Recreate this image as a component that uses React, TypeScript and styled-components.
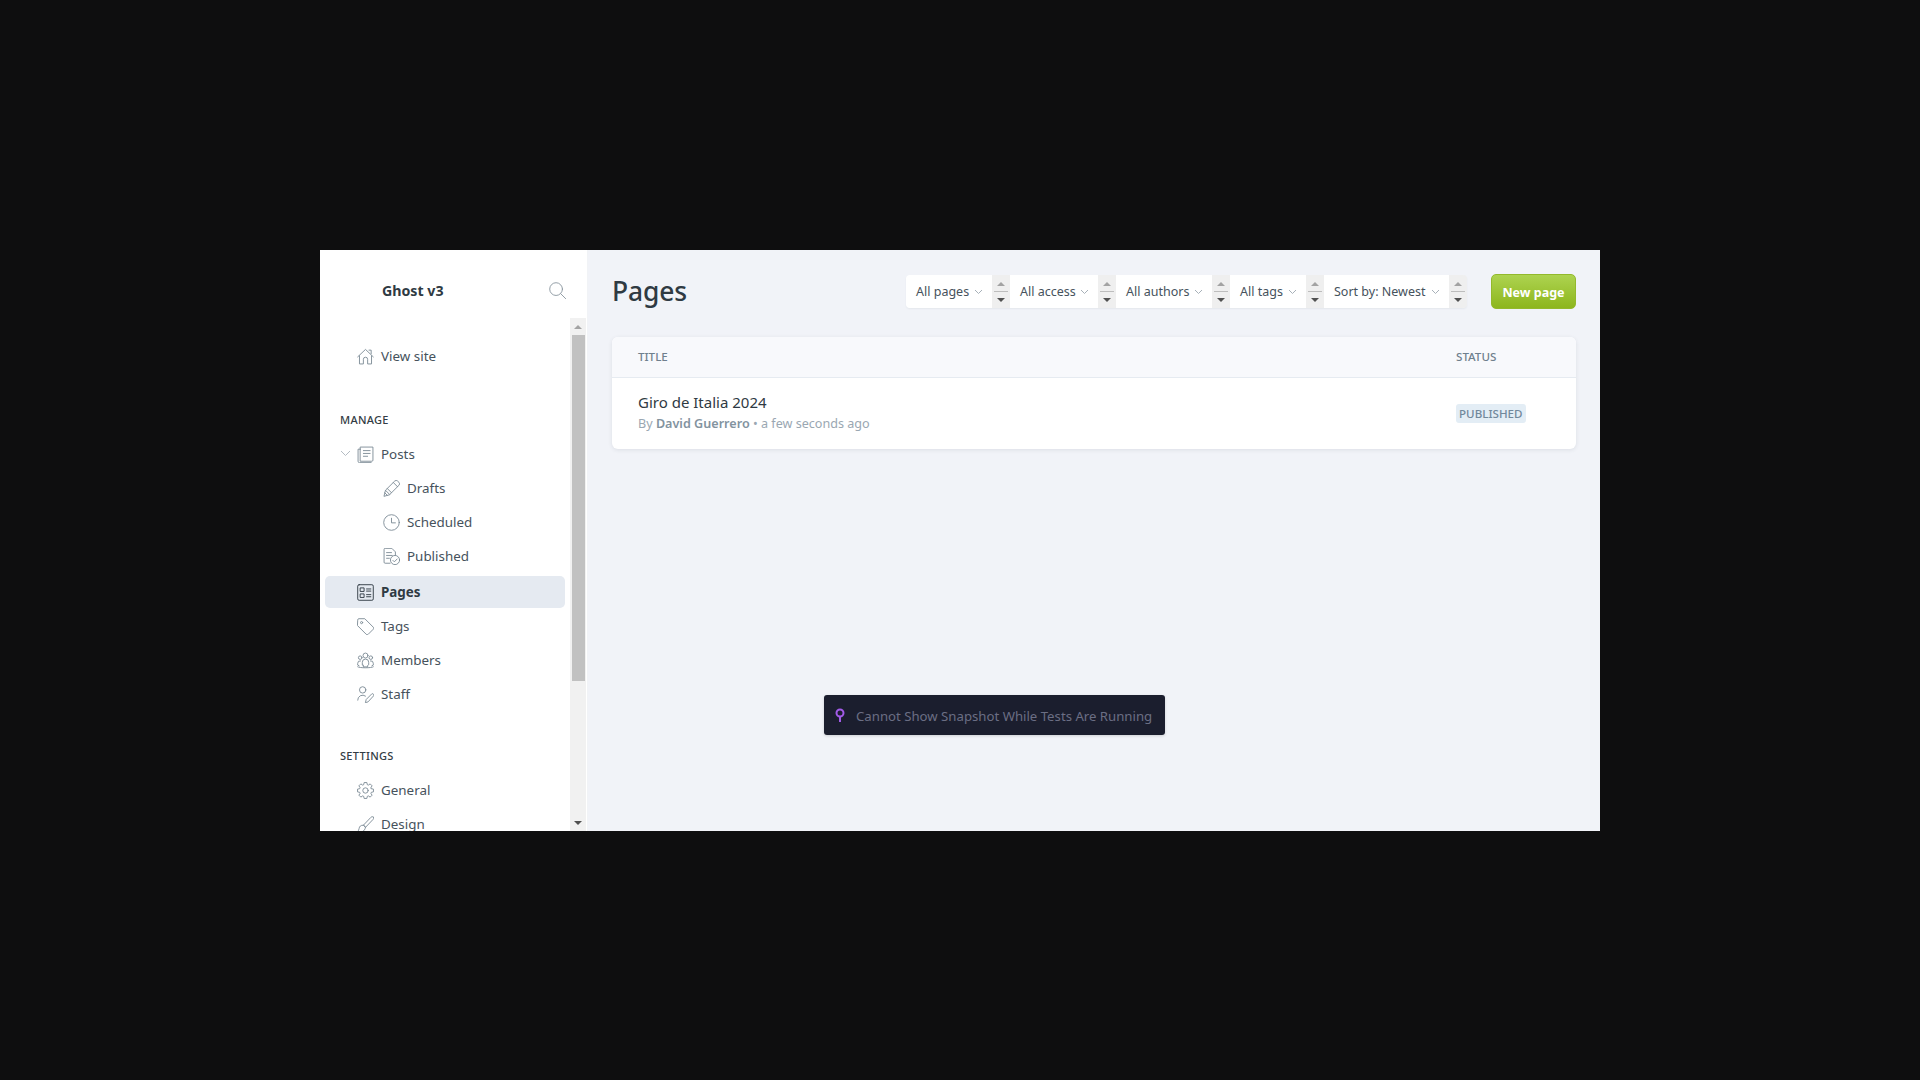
import * as React from 'react'
import styled, {createGlobalStyle} from 'styled-components'

const GlobalStyle = createGlobalStyle`
  html, body {
    margin: 0;
    padding: 0;
    height: 100%;
    background: #0e0e0f;
  }
  * {
    box-sizing: border-box;
  }
`

const Stage = styled('div')`
  display: flex;
  justify-content: center;
  padding-top: 250px;
  height: 1080px;
  overflow: hidden;
  font-family: "Noto Sans", "Open Sans", sans-serif;
  color: #3b4650;
`
const Frame = styled('div')`
  position: relative;
  display: flex;
  width: 1280px;
  height: 581px;
  background: #f1f3f8;
  overflow: hidden;
`
const Sidebar = styled('aside')`
  display: flex;
  flex-direction: column;
  width: 268px;
  flex-shrink: 0;
  background: #fff;
  border-right: 1px solid #f1f3f6;
`
const SidebarHead = styled('div')`
  display: flex;
  align-items: center;
  justify-content: space-between;
  height: 68px;
  flex-shrink: 0;
  padding: 12px 21px 0 62px;
`
const BlogName = styled('div')`
  font-size: 14.2px;
  font-weight: 700;
  color: #2f3a43;
`
const SearchBox = styled('span')`
  display: flex;
  color: #8a969f;
`
const SidebarBody = styled('div')`
  display: flex;
  flex: 1;
  min-height: 0;
  padding-right: 1px;
`
const Nav = styled('nav')`
  flex: 1;
  min-width: 0;
  overflow: hidden;
  padding: 22px 5px 0 5px;
`
const SectionLabel = styled('div')<{$top: number; $bottom: number}>`
  height: 16px;
  line-height: 16px;
  margin: ${p => p.$top}px 0 ${p => p.$bottom}px 15px;
  font-size: 11px;
  font-weight: 500;
  letter-spacing: 0.3px;
  color: #333c44;
`
const NavItem = styled('a')<{$active?: boolean; $sub?: boolean}>`
  position: relative;
  display: flex;
  align-items: center;
  gap: 7px;
  height: 32px;
  margin-bottom: 2px;
  padding-left: ${p => (p.$sub ? 58 : 32)}px;
  border-radius: 5px;
  font-size: 13.4px;
  font-weight: ${p => (p.$active ? 700 : 400)};
  color: ${p => (p.$active ? '#2f3a43' : '#46525c')};
  background: ${p => (p.$active ? '#e5eaf1' : 'transparent')};
  svg {
    color: ${p => (p.$active ? '#2f3a43' : '#7d8b96')};
  }
`
const Expander = styled('svg')`
  position: absolute;
  left: 15px;
  top: 12px;
`
const SubList = styled('div')`
  margin-bottom: 4px;
`
const Scrollbar = styled('div')`
  display: flex;
  flex-direction: column;
  align-items: center;
  width: 16px;
  flex-shrink: 0;
  background: #f1f1f1;
`
const ScrollArrow = styled('div')<{$down?: boolean}>`
  display: flex;
  align-items: center;
  justify-content: center;
  width: 100%;
  height: 17px;
  &::after {
    content: '';
    border-left: 4px solid transparent;
    border-right: 4px solid transparent;
    ${p => (p.$down
      ? 'border-top: 4px solid #505050;'
      : 'border-bottom: 4px solid #a3a3a3;')}
  }
`
const ScrollTrack = styled('div')`
  flex: 1;
  width: 100%;
`
const ScrollThumb = styled('div')`
  width: 13px;
  height: 346px;
  margin-left: 2px;
  background: #c1c1c1;
`
const Main = styled('main')`
  flex: 1;
  min-width: 0;
  padding: 24px 24px 0 24px;
`
const TopBar = styled('header')`
  display: flex;
  align-items: center;
  justify-content: space-between;
  height: 35px;
  margin-bottom: 28px;
`
const Title = styled('h1')`
  margin: 0 0 1px;
  font-size: 26.4px;
  font-weight: 500;
  color: #2f3a43;
  letter-spacing: -0.1px;
`
const Actions = styled('div')`
  display: flex;
  align-items: center;
  gap: 24px;
`
const Filters = styled('div')`
  display: flex;
  height: 33px;
  border-radius: 4px;
  overflow: hidden;
  box-shadow: 0 1px 2px rgba(40, 50, 70, 0.06);
`
const Filter = styled('div')<{$width: number}>`
  display: flex;
  align-items: center;
  justify-content: space-between;
  width: ${p => p.$width}px;
  padding: 0 9px 0 10px;
  background: #fff;
  font-size: 12.5px;
  color: #46525c;
  white-space: nowrap;
`
const Spinner = styled('div')`
  position: relative;
  display: flex;
  flex-direction: column;
  align-items: center;
  justify-content: space-between;
  width: 18px;
  padding: 7px 0 6px;
  background: #efefef;
  &::before {
    content: '';
    position: absolute;
    left: 2px;
    right: 2px;
    top: 16px;
    height: 1px;
    background: #bdbdbd;
  }
`
const SpinUp = styled('span')`
  border-left: 4px solid transparent;
  border-right: 4px solid transparent;
  border-bottom: 4px solid #a3a3a3;
`
const SpinDown = styled('span')`
  border-left: 4px solid transparent;
  border-right: 4px solid transparent;
  border-top: 4px solid #505050;
`
const PrimaryButton = styled('button')`
  width: 85px;
  height: 35px;
  padding: 1px 0 0;
  border: 1px solid #93b92c;
  border-radius: 5px;
  background: linear-gradient(#add350, #8db61d);
  color: #fff;
  font-family: inherit;
  font-size: 12.5px;
  font-weight: 700;
`
const Table = styled('section')`
  border-radius: 6px;
  background: #fff;
  overflow: hidden;
  box-shadow: 0 1px 4px rgba(40, 50, 70, 0.1);
`
const TableHead = styled('div')`
  display: flex;
  align-items: center;
  justify-content: space-between;
  height: 41px;
  padding: 0 24px 1px 26px;
  background: #f8f9fc;
  border-bottom: 1px solid #e6ebf1;
  font-size: 11.6px;
  font-weight: 500;
  color: #6f7f8d;
`
const StatusCol = styled('div')`
  width: 96px;
`
const TableRow = styled('div')`
  display: flex;
  align-items: center;
  justify-content: space-between;
  height: 71px;
  padding: 0 24px 3px 26px;
`
const PageTitle = styled('div')`
  font-size: 15px;
  line-height: 20px;
  color: #2f3a43;
`
const Meta = styled('div')`
  margin-top: 3px;
  font-size: 12.6px;
  line-height: 18px;
  color: #9aa7b2;
  strong {
    font-weight: 600;
    color: #83939f;
  }
`
const Badge = styled('span')`
  display: inline-block;
  padding: 0 3px;
  height: 19px;
  line-height: 19px;
  border-radius: 3px;
  background: #e3edf5;
  color: #71889b;
  font-size: 11.6px;
  font-weight: 500;
`
const Toast = styled('div')`
  position: absolute;
  left: 504px;
  top: 445px;
  display: flex;
  align-items: center;
  gap: 11px;
  width: 341px;
  height: 40px;
  padding: 1px 0 0 11px;
  border-radius: 3px;
  background: #1b1e2e;
  color: #6b6e84;
  font-size: 13.2px;
  white-space: nowrap;
  box-shadow: 0 1px 3px rgba(0, 0, 0, 0.15);
`

type IconProps = {children: React.ReactNode; size?: number}

const Icon = ({children, size = 17}: IconProps) => (
  <svg width={size} height={size} viewBox="0 0 24 24" fill="none" stroke="currentColor" strokeWidth={1.3} strokeLinecap="round" strokeLinejoin="round">
    {children}
  </svg>
)

// 8 toothed wheel for the General item
const gearPath = () => {
  const points: string[] = []
  for (let i = 0; i < 8; i++) {
    const mid = (i * Math.PI) / 4
    const corners: [number, number][] = [[8.6, -0.3], [11.4, -0.17], [11.4, 0.17], [8.6, 0.3]]
    corners.forEach(([r, d]) => {
      points.push(`${(12 + r * Math.cos(mid + d)).toFixed(2)} ${(12 + r * Math.sin(mid + d)).toFixed(2)}`)
    })
  }
  return `M${points.join('L')}Z`
}

const SearchIcon = () => (
  <Icon>
    <circle cx="10" cy="10" r="9" />
    <path d="M16.5 16.5L23.5 23.5" />
  </Icon>
)
const HomeIcon = () => (
  <Icon>
    <path d="M1 12.5L12 2l11 10.5" />
    <path d="M17 3h3v5" />
    <path d="M3.5 11v11.5H9V16a3 3 0 0 1 6 0v6.5h5.5V11" />
  </Icon>
)
const PostsIcon = () => (
  <Icon>
    <path d="M5 1.5h17.5v18.5a1.5 1.5 0 0 1-1.5 1.5H5z" />
    <path d="M5 4.5H1.5v17a2 2 0 0 0 2 2H20" />
    <path d="M9 6.5h9.5M9 10.5h9.5M9 14.5h6" />
  </Icon>
)
const PencilIcon = () => (
  <Icon>
    <path d="M1.5 22.5l2-8L16.5 1.5a3 3 0 0 1 4.2 0l1.8 1.8a3 3 0 0 1 0 4.2L9.5 20.5z" />
    <path d="M3.5 14.5l6 6M14.5 3.5l6 6M6 12l6 6M2.5 18l3.5 3.5" />
  </Icon>
)
const ClockIcon = () => (
  <Icon>
    <circle cx="12" cy="12" r="11" />
    <path d="M12 6v6.5h5.5" />
  </Icon>
)
const PublishedIcon = () => (
  <Icon>
    <path d="M10 21.5H3a1.5 1.5 0 0 1-1.5-1.5V2A1.5 1.5 0 0 1 3 .5h9.5l5 5V10" />
    <path d="M5 6.5h7M5 10.5h8M5 14.5h4" />
    <circle cx="17" cy="17" r="6.5" />
    <path d="M14 17.5l2 2 4-4" />
  </Icon>
)
const PagesIcon = () => (
  <Icon>
    <rect x="1" y="1" width="22" height="22" rx="2" />
    <rect x="5" y="5.5" width="5" height="5" />
    <rect x="5" y="14" width="5" height="5" />
    <path d="M13.5 7h6M13.5 10h6M13.5 15h6M13.5 18h6" />
  </Icon>
)
const TagIcon = () => (
  <Icon>
    <path d="M1 2.5A1.5 1.5 0 0 1 2.5 1H11l12 12a2 2 0 0 1 0 2.8l-7.2 7.2a2 2 0 0 1-2.8 0L1 11z" />
    <circle cx="6.5" cy="6.5" r="1.5" />
  </Icon>
)
const MembersIcon = () => (
  <Icon>
    <circle cx="12" cy="5" r="3.5" />
    <circle cx="4.5" cy="8" r="2.5" />
    <circle cx="19.5" cy="8" r="2.5" />
    <path d="M7.5 18v-3.5a4.5 4.5 0 0 1 9 0V18L15 19v2H9v-2z" />
    <path d="M5 12.5a3.5 3.5 0 0 0-4 3.5v2.5l2 1" />
    <path d="M19 12.5a3.5 3.5 0 0 1 4 3.5v2.5l-2 1" />
    <path d="M1 21c2.5 1.8 19.5 1.8 22 0" />
  </Icon>
)
const StaffIcon = () => (
  <Icon>
    <circle cx="8" cy="5.5" r="4.5" />
    <path d="M1 20a7 7 0 0 1 11-5.8" />
    <path d="M12 23l1-4 8-8a2 2 0 0 1 2.5 2.8L16 22z" />
  </Icon>
)
const GearIcon = () => (
  <Icon>
    <circle cx="12" cy="12" r="3.8" />
    <path d={gearPath()} />
  </Icon>
)
const BrushIcon = () => (
  <Icon>
    <path d="M23 1.5c-1-1-2.5-.5-3.5.5L9 13l3 3L22.500 5c1-1 1.500-2.500.5-3.500z" />
    <path d="M9 13c-4-.5-5.500 2-6 4.500-.3 1.800-1 3.500-2 4.500 4 1.500 10 .5 11-6z" />
  </Icon>
)
const Caret = () => (
  <svg width="9" height="6" viewBox="0 0 9 6" fill="none" stroke="#a7b0b8" strokeWidth="1">
    <path d="M1 1l3.500 3.500L8 1" />
  </svg>
)
const PinIcon = () => (
  <svg width="10" height="15" viewBox="0 0 10 15" fill="none" stroke="#a25be8" strokeWidth="2">
    <circle cx="5" cy="5" r="3.500" />
    <path d="M5 9v5" />
  </svg>
)

const filters = [
  {label: 'All pages', width: 86},
  {label: 'All access', width: 88},
  {label: 'All authors', width: 96},
  {label: 'All tags', width: 76},
  {label: 'Sort by: Newest', width: 125},
]

const App = () => (
  <Stage>
    <GlobalStyle />
    <Frame>
      <Sidebar>
        <SidebarHead>
          <BlogName>Ghost v3</BlogName>
          <SearchBox><SearchIcon /></SearchBox>
        </SidebarHead>
        <SidebarBody>
          <Nav>
            <NavItem><HomeIcon />View site</NavItem>
            <SectionLabel $top={40} $bottom={10}>MANAGE</SectionLabel>
            <NavItem>
              <Expander width="11" height="7" viewBox="0 0 11 7" fill="none" stroke="#b4bcc3" strokeWidth="1">
                <path d="M1 1l4.500 4.500L10 1" />
              </Expander>
              <PostsIcon />Posts
            </NavItem>
            <SubList>
              <NavItem $sub><PencilIcon />Drafts</NavItem>
              <NavItem $sub><ClockIcon />Scheduled</NavItem>
              <NavItem $sub><PublishedIcon />Published</NavItem>
            </SubList>
            <NavItem $active><PagesIcon />Pages</NavItem>
            <NavItem><TagIcon />Tags</NavItem>
            <NavItem><MembersIcon />Members</NavItem>
            <NavItem><StaffIcon />Staff</NavItem>
            <SectionLabel $top={38} $bottom={10}>SETTINGS</SectionLabel>
            <NavItem><GearIcon />General</NavItem>
            <NavItem><BrushIcon />Design</NavItem>
          </Nav>
          <Scrollbar>
            <ScrollArrow />
            <ScrollTrack><ScrollThumb /></ScrollTrack>
            <ScrollArrow $down />
          </Scrollbar>
        </SidebarBody>
      </Sidebar>
      <Main>
        <TopBar>
          <Title>Pages</Title>
          <Actions>
            <Filters>
              {filters.map(f => (
                <React.Fragment key={f.label}>
                  <Filter $width={f.width}>{f.label}<Caret /></Filter>
                  <Spinner><SpinUp /><SpinDown /></Spinner>
                </React.Fragment>
              ))}
            </Filters>
            <PrimaryButton>New page</PrimaryButton>
          </Actions>
        </TopBar>
        <Table>
          <TableHead>
            <div>TITLE</div>
            <StatusCol>STATUS</StatusCol>
          </TableHead>
          <TableRow>
            <div>
              <PageTitle>Giro de Italia 2024</PageTitle>
              <Meta>By <strong>David Guerrero</strong> • a few seconds ago</Meta>
            </div>
            <StatusCol><Badge>PUBLISHED</Badge></StatusCol>
          </TableRow>
        </Table>
      </Main>
      <Toast><PinIcon />Cannot Show Snapshot While Tests Are Running</Toast>
    </Frame>
  </Stage>
)

export default App
